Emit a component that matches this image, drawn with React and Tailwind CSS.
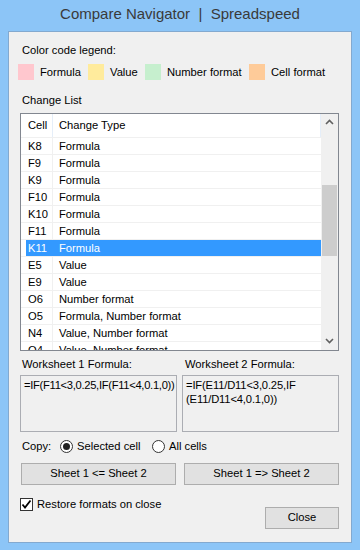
import React from "react";

const rows = [
  ["K8", "Formula"],
  ["F9", "Formula"],
  ["K9", "Formula"],
  ["F10", "Formula"],
  ["K10", "Formula"],
  ["F11", "Formula"],
  ["K11", "Formula"],
  ["E5", "Value"],
  ["E9", "Value"],
  ["O6", "Number format"],
  ["O5", "Formula, Number format"],
  ["N4", "Value, Number format"],
  ["O4", "Value, Number format"],
];

const legend = [
  ["bg-[#ffc7ce]", "Formula", "w-[70px]"],
  ["bg-[#ffeb9c]", "Value", "w-[57px]"],
  ["bg-[#c6efce]", "Number format", "w-[104px]"],
  ["bg-[#fecb99]", "Cell format", ""],
];

const Radio = ({ checked }) => (
  <span className="w-[13px] h-[13px] shrink-0 rounded-full border border-[#333] bg-white flex items-center justify-center">
    {checked && <span className="w-[7px] h-[7px] rounded-full bg-[#222]" />}
  </span>
);

const App = () => {
  return (
    <div
      className="w-[360px] h-[550px] bg-[#8cc5f7] flex flex-col text-[11.2px] text-black"
      style={{ fontFamily: '"Liberation Sans", Arial, sans-serif' }}
    >
      <div className="h-[31px] flex items-center justify-center text-[15px] text-[#3a3a3a] pb-[2px]">
        Compare Navigator&nbsp;&nbsp;|&nbsp;&nbsp;Spreadspeed
      </div>

      <div className="mx-[8px] h-[512px] bg-[#f0f0f0] border border-[#83a9cf] pl-[11px] pr-[12px] flex flex-col">
        <div className="mt-[10px] h-[16px] leading-[16px] pl-[2px]">Color code legend:</div>

        <div className="mt-[6px] flex items-center -ml-[2px] whitespace-nowrap">
          {legend.map(([bg, label, w]) => (
            <div key={label} className={`flex items-center ${w}`}>
              <span className={`w-[16px] h-[16px] shrink-0 ${bg}`} />
              <span className="ml-[6px]">{label}</span>
            </div>
          ))}
        </div>

        <div className="mt-[11px] h-[16px] leading-[16px] pl-[2px]">Change List</div>

        <div className="mt-[5px] h-[238px] border border-[#828790] bg-white flex overflow-hidden">
          <div className="flex-1 flex flex-col overflow-hidden whitespace-nowrap">
            <div className="h-[24px] shrink-0 flex border-b border-[#f0f0f0]">
              <div className="w-[32px] border-r border-[#e5eef9] pl-[7px] flex items-center">Cell</div>
              <div className="flex-1 border-r border-[#e5eef9] pl-[6px] flex items-center">Change Type</div>
            </div>
            {rows.map(([cell, type]) => {
              const sel = cell === "K11";
              return (
                <div key={cell} className="h-[17px] shrink-0 flex border-b border-[#f0f0f0] pl-[5px]">
                  <div className={`flex-1 flex ${sel ? "bg-[#3399ff] text-white" : ""}`}>
                    <div className={`w-[27px] pl-[2px] leading-[16px] ${sel ? "" : "border-r border-[#f0f0f0]"}`}>
                      {cell}
                    </div>
                    <div className="flex-1 pl-[6px] leading-[16px]">{type}</div>
                  </div>
                </div>
              );
            })}
          </div>

          <div className="w-[17px] shrink-0 bg-[#f0f0f0] flex flex-col">
            <div className="h-[17px] flex items-center justify-center">
              <svg width="9" height="6" viewBox="0 0 9 6">
                <path d="M1 5 L4.5 1.5 L8 5" fill="none" stroke="#606060" strokeWidth="1.6" />
              </svg>
            </div>
            <div className="h-[54px]" />
            <div className="h-[71px] mx-[1px] bg-[#cdcdcd]" />
            <div className="flex-1" />
            <div className="h-[17px] flex items-center justify-center">
              <svg width="9" height="6" viewBox="0 0 9 6">
                <path d="M1 1 L4.5 4.5 L8 1" fill="none" stroke="#606060" strokeWidth="1.6" />
              </svg>
            </div>
          </div>
        </div>

        <div className="mt-[5px] flex">
          <div className="w-[163px] pl-[2px] h-[16px] leading-[16px]">Worksheet 1 Formula:</div>
          <div className="pl-[2px] h-[16px] leading-[16px]">Worksheet 2 Formula:</div>
        </div>

        <div className="mt-[3px] flex justify-between">
          <div className="w-[157px] h-[57px] border border-[#abadb3] bg-[#f0f0f0] pl-[3px] pr-[1px] pt-[2px] leading-[14px] tracking-[-0.3px]">
            =IF(F11&lt;3,0.25,IF(F11&lt;4,0.1,0))
          </div>
          <div className="w-[157px] h-[57px] border border-[#abadb3] bg-[#f0f0f0] pl-[3px] pr-[1px] pt-[2px] leading-[14px] tracking-[-0.15px]">
            =IF(E11/D11&lt;3,0.25,IF (E11/D11&lt;4,0.1,0))
          </div>
        </div>

        <div className="mt-[7px] h-[16px] flex items-center pl-[2px] whitespace-nowrap">
          <span className="w-[38px]">Copy:</span>
          <Radio checked />
          <span className="ml-[4px] w-[75px]">Selected cell</span>
          <Radio />
          <span className="ml-[4px]">All cells</span>
        </div>

        <div className="mt-[8px] flex justify-between pl-[1px]">
          <button className="w-[155px] h-[22px] bg-[#e1e1e1] border border-[#adadad]">
            Sheet 1 &lt;= Sheet 2
          </button>
          <button className="w-[155px] h-[22px] bg-[#e1e1e1] border border-[#adadad]">
            Sheet 1 =&gt; Sheet 2
          </button>
        </div>

        <div className="mt-[11px] flex justify-between items-start">
          <div className="flex items-center">
            <span className="w-[13px] h-[13px] border border-[#333] bg-white flex items-center justify-center">
              <svg width="11" height="11" viewBox="0 0 11 11">
                <path d="M1.5 5.5 L4 8.5 L9.5 1.5" fill="none" stroke="#000" strokeWidth="1.8" />
              </svg>
            </span>
            <span className="ml-[4px]">Restore formats on close</span>
          </div>
          <button className="mt-[11px] w-[74px] h-[22px] bg-[#e1e1e1] border border-[#adadad]">
            Close
          </button>
        </div>
      </div>
    </div>
  );
};

export default App;
